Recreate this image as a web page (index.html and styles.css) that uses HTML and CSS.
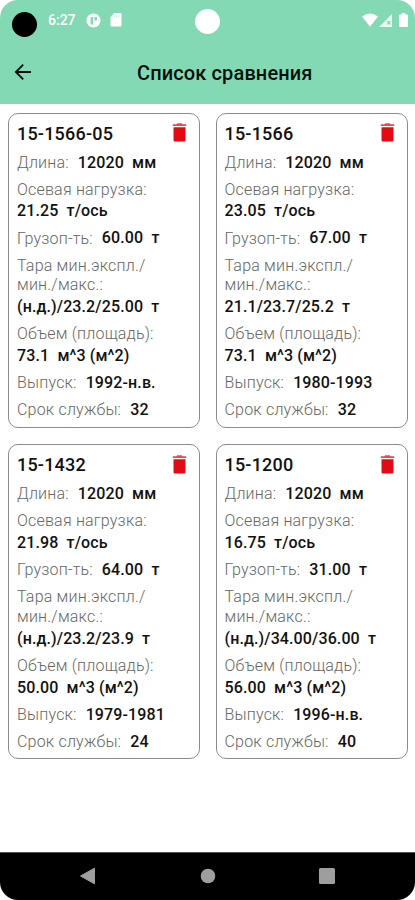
FILE: index.html
```html
<!DOCTYPE html>
<html lang="ru">
<head>
    <meta charset="UTF-8">
    <meta name="viewport" content="width=device-width, initial-scale=1.0">
    <title>Список сравнения</title>
    <link rel="stylesheet" href="styles.css">
</head>
<body>
    <div class="screen">
        <header class="header">
            <div class="status-bar">
                <span class="camera"></span>
                <span class="time">6:27</span>
                <svg class="status-app" width="15" height="15" viewBox="0 0 15 15">
                    <circle cx="7.5" cy="7.5" r="7" fill="#fff"/>
                    <path d="M4.5 4h2.6v7.6H4.500zM8.4 4h2.600v3.400H8.400z" fill="#84d9b5"/>
                </svg>
                <svg class="status-card" width="12" height="14" viewBox="0 0 12 14">
                    <path d="M4.2 0H10.5q1 0 1 1V12.5q0 1-1 1H1.5q-1 0-1-1V4z" fill="#fff"/>
                    <path d="M4.3 2.2v2M6.6 2.2v2M8.9 2.2v2" stroke="#b9ead5" stroke-width="1"/>
                </svg>
                <span class="lens"></span>
                <svg class="status-wifi" width="16" height="14" viewBox="0 0 16 14">
                    <path d="M0 3.6Q8-2.6 16 3.6L8 13.7z" fill="#fff"/>
                </svg>
                <svg class="status-signal" width="13" height="13" viewBox="0 0 13 13">
                    <path d="M0 13L13 0V13z" fill="#fff" fill-opacity=".85"/>
                    <path d="M8 7l3.500 3.500M11.500 7L8 10.500" stroke="#84d9b5" stroke-width="1.2"/>
                </svg>
                <svg class="status-battery" width="9" height="14" viewBox="0 0 9 14">
                    <path d="M2.8 0h3.4v1.4H8q1 0 1 1V13q0 1-1 1H1q-1 0-1-1V2.4q0-1 1-1h1.8z" fill="#fff"/>
                </svg>
            </div>
            <div class="toolbar">
                <svg class="back" width="18" height="18" viewBox="0 0 18 18">
                    <path d="M17 9H2M9.2 1.7L1.9 9l7.3 7.3" fill="none" stroke="#07100c" stroke-width="1.9"/>
                </svg>
                <h1>Список сравнения</h1>
            </div>
        </header>

        <main class="cards">
            <section class="card">
                <div class="card-top">
                    <h2>15-1566-05</h2>
                    <svg class="trash" width="15" height="19" viewBox="0 0 15 19"><path class="lid" d="M.8 1.2h3.7l.9-.9h4.2l.9.9h3.7v1.7H.8z"/><path d="M1.5 4.2h12V17q0 1.6-1.6 1.6H3.1Q1.5 18.6 1.5 17z"/></svg>
                </div>
                <div class="row"><span class="label">Длина:</span><span class="value">12020  мм</span></div>
                <div class="row stacked"><span class="label">Осевая нагрузка:</span><span class="value">21.25  т/ось</span></div>
                <div class="row"><span class="label">Грузоп-ть:</span><span class="value">60.00  т</span></div>
                <div class="row stacked"><span class="label">Тара мин.экспл./<br>мин./макс.:</span><span class="value">(н.д.)/23.2/25.00  т</span></div>
                <div class="row stacked"><span class="label">Объем (площадь):</span><span class="value">73.1  м^3 (м^2)</span></div>
                <div class="row"><span class="label">Выпуск:</span><span class="value">1992-н.в.</span></div>
                <div class="row"><span class="label">Срок службы:</span><span class="value">32</span></div>
            </section>

            <section class="card">
                <div class="card-top">
                    <h2>15-1566</h2>
                    <svg class="trash" width="15" height="19" viewBox="0 0 15 19"><path class="lid" d="M.8 1.2h3.7l.9-.9h4.2l.9.9h3.7v1.7H.8z"/><path d="M1.5 4.2h12V17q0 1.6-1.6 1.6H3.1Q1.5 18.6 1.5 17z"/></svg>
                </div>
                <div class="row"><span class="label">Длина:</span><span class="value">12020  мм</span></div>
                <div class="row stacked"><span class="label">Осевая нагрузка:</span><span class="value">23.05  т/ось</span></div>
                <div class="row"><span class="label">Грузоп-ть:</span><span class="value">67.00  т</span></div>
                <div class="row stacked"><span class="label">Тара мин.экспл./<br>мин./макс.:</span><span class="value">21.1/23.7/25.2  т</span></div>
                <div class="row stacked"><span class="label">Объем (площадь):</span><span class="value">73.1  м^3 (м^2)</span></div>
                <div class="row"><span class="label">Выпуск:</span><span class="value">1980-1993</span></div>
                <div class="row"><span class="label">Срок службы:</span><span class="value">32</span></div>
            </section>

            <section class="card">
                <div class="card-top">
                    <h2>15-1432</h2>
                    <svg class="trash" width="15" height="19" viewBox="0 0 15 19"><path class="lid" d="M.8 1.2h3.7l.9-.9h4.2l.9.9h3.7v1.7H.8z"/><path d="M1.5 4.2h12V17q0 1.6-1.6 1.6H3.1Q1.5 18.6 1.5 17z"/></svg>
                </div>
                <div class="row"><span class="label">Длина:</span><span class="value">12020  мм</span></div>
                <div class="row stacked"><span class="label">Осевая нагрузка:</span><span class="value">21.98  т/ось</span></div>
                <div class="row"><span class="label">Грузоп-ть:</span><span class="value">64.00  т</span></div>
                <div class="row stacked"><span class="label">Тара мин.экспл./<br>мин./макс.:</span><span class="value">(н.д.)/23.2/23.9  т</span></div>
                <div class="row stacked"><span class="label">Объем (площадь):</span><span class="value">50.00  м^3 (м^2)</span></div>
                <div class="row"><span class="label">Выпуск:</span><span class="value">1979-1981</span></div>
                <div class="row"><span class="label">Срок службы:</span><span class="value">24</span></div>
            </section>

            <section class="card">
                <div class="card-top">
                    <h2>15-1200</h2>
                    <svg class="trash" width="15" height="19" viewBox="0 0 15 19"><path class="lid" d="M.8 1.2h3.7l.9-.9h4.2l.9.9h3.7v1.7H.8z"/><path d="M1.5 4.2h12V17q0 1.6-1.6 1.6H3.1Q1.5 18.6 1.5 17z"/></svg>
                </div>
                <div class="row"><span class="label">Длина:</span><span class="value">12020  мм</span></div>
                <div class="row stacked"><span class="label">Осевая нагрузка:</span><span class="value">16.75  т/ось</span></div>
                <div class="row"><span class="label">Грузоп-ть:</span><span class="value">31.00  т</span></div>
                <div class="row stacked"><span class="label">Тара мин.экспл./<br>мин./макс.:</span><span class="value">(н.д.)/34.00/36.00  т</span></div>
                <div class="row stacked"><span class="label">Объем (площадь):</span><span class="value">56.00  м^3 (м^2)</span></div>
                <div class="row"><span class="label">Выпуск:</span><span class="value">1996-н.в.</span></div>
                <div class="row"><span class="label">Срок службы:</span><span class="value">40</span></div>
            </section>
        </main>

        <nav class="nav-bar">
            <svg width="18" height="18" viewBox="0 0 18 18"><path d="M1.5 9L15.5 1.2V16.8z" fill="#9e9e9e" stroke="#9e9e9e" stroke-linejoin="round"/></svg>
            <svg width="18" height="18" viewBox="0 0 18 18"><circle cx="9" cy="9" r="7.3" fill="#9e9e9e"/></svg>
            <svg width="18" height="18" viewBox="0 0 18 18"><rect x="1" y="1" width="16" height="16" rx="1.5" fill="#9e9e9e"/></svg>
        </nav>
    </div>
</body>
</html>
```
FILE: styles.css
```css
* {
    box-sizing: border-box;
}
body {
    margin: 0;
    background-color: #fff;
    font-family: Roboto, "Noto Sans", sans-serif;
}
.screen {
    display: flex;
    flex-direction: column;
    width: 415px;
    height: 900px;
    border-radius: 18px;
    overflow: hidden;
}
.header {
    height: 104px;
    background-color: #84d9b5;
}
.status-bar {
    display: flex;
    align-items: center;
    height: 40px;
    padding-left: 12px;
    padding-right: 7px;
}
.camera,
.lens {
    width: 25px;
    height: 25px;
    border-radius: 50%;
    background-color: #000;
    margin-top: 8px;
}
.lens {
    background-color: #fff;
    margin-top: 3px;
    margin-left: 73px;
}
.time {
    width: 28px;
    margin-left: 11px;
    color: #fff;
    font-size: 14px;
    font-weight: 500;
    white-space: nowrap;
}
.status-app {
    margin-left: 10px;
}
.status-card {
    margin-left: 9px;
}
.status-wifi {
    margin-left: auto;
}
.status-signal {
    margin-left: 1px;
}
.status-battery {
    margin-left: 7px;
}
.toolbar {
    display: flex;
    align-items: center;
    height: 64px;
    padding-left: 14px;
}
h1 {
    margin: 1px 0 0 105px;
    color: #07100c;
    font-size: 20px;
    font-weight: 500;
    line-height: 24px;
    letter-spacing: 0.12px;
    white-space: nowrap;
}
.cards {
    flex: 1;
    display: grid;
    grid-template-columns: 192px 192px;
    grid-auto-rows: 315px;
    align-content: start;
    gap: 16.5px 15.5px;
    padding: 8.5px 8px 0;
}
.card {
    padding: 9px 8px 0;
    border: 1px solid #8c8c8c;
    border-radius: 10px;
}
.card-top {
    display: flex;
    justify-content: space-between;
    align-items: center;
    height: 22px;
    padding-right: 4px;
    margin-bottom: 7px;
}
h2 {
    margin: 0;
    color: #111;
    font-size: 18px;
    font-weight: 500;
    line-height: 22px;
    letter-spacing: 0.2px;
}
.trash {
    margin-top: -2px;
    fill: #e30b13;
}
.lid {
    opacity: 0.75;
}
.row {
    display: flex;
    margin-bottom: 5px;
    font-size: 16px;
    white-space: pre;
}
.stacked {
    flex-direction: column;
}
.label {
    padding: 1.2px 0;
    margin-right: 9px;
    color: #666;
    font-weight: 300;
    line-height: 19.6px;
    letter-spacing: 0.2px;
}
.value {
    color: #111;
    font-weight: 500;
    line-height: 22px;
    letter-spacing: 0.12px;
}
.nav-bar {
    display: flex;
    justify-content: space-between;
    height: 48px;
    padding: 14px 79px 0;
    border-top: 1px solid #555;
    background-color: #000;
}
```
